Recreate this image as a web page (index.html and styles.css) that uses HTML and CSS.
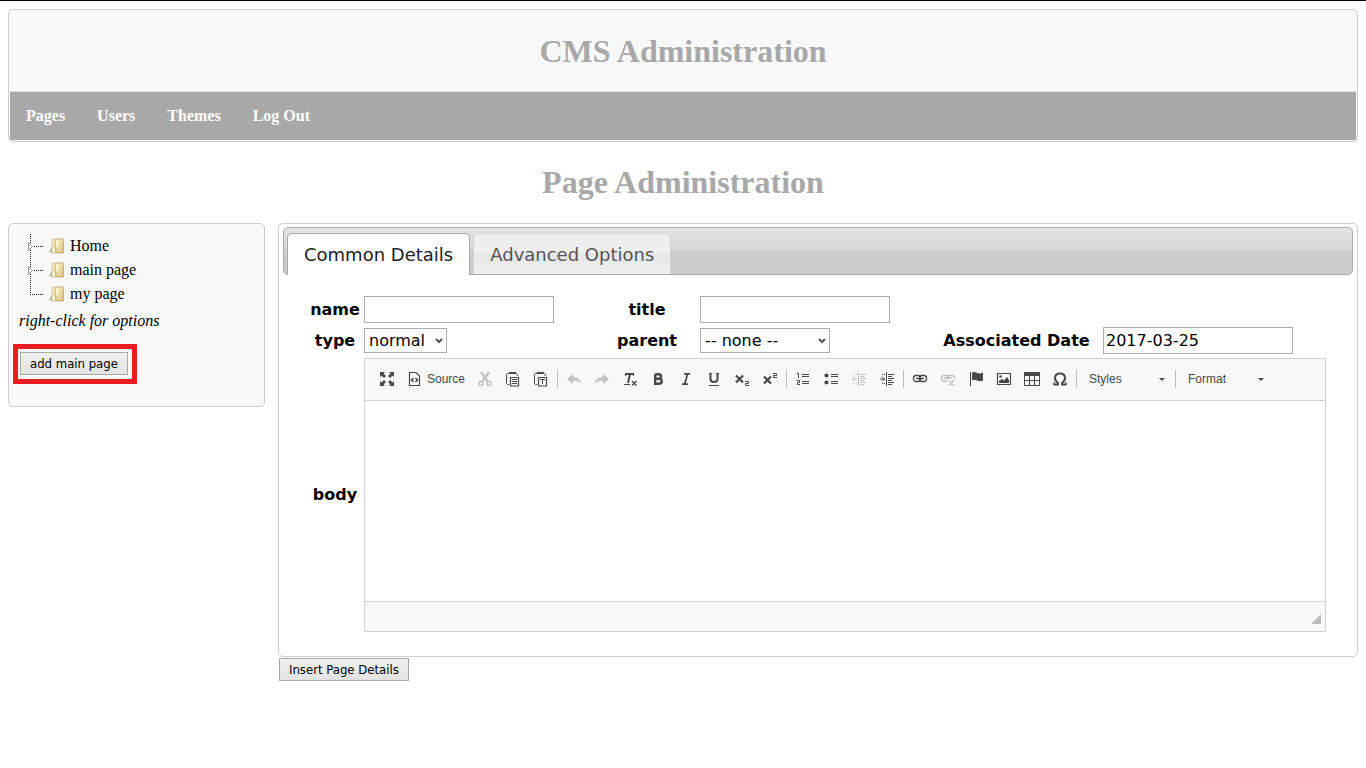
FILE: index.html
```html
<!DOCTYPE html>
<html lang="en">
<head>
<meta charset="utf-8">
<title>CMS Administration</title>
<link rel="stylesheet" href="styles.css">
</head>
<body>
<svg class="defs" width="0" height="0" aria-hidden="true">
  <defs>
    <linearGradient id="gold" x1="0" y1="0" x2="1" y2="1"><stop offset="0" stop-color="#fffae0"/><stop offset="1" stop-color="#d9b96c"/></linearGradient>
    <symbol id="folder" viewBox="0 0 16 16">
      <path d="M2 14V10L3 8V1H8V15H2Z" fill="url(#gold)" stroke="#cdbb8c" stroke-width=".7"/>
      <path d="M0 14L3 9V14Z" fill="#b8b4a8"/>
      <path d="M7 1H14.500V15H8L7 13Z" fill="url(#gold)" stroke="#c2a766" stroke-width=".8"/>
      <path d="M7 2L9 3V9H7ZM4 9L6 10V14H3Z" fill="#fff6cc"/>
    </symbol>
  </defs>
</svg>
<header class="masthead">
  <h1 class="masthead-title">CMS Administration</h1>
  <nav class="menu">
    <a href="#pages">Pages</a>
    <a href="#users">Users</a>
    <a href="#themes">Themes</a>
    <a href="#logout">Log Out</a>
  </nav>
</header>
<h1 class="page-title">Page Administration</h1>
<div class="layout">
  <aside class="sidebar">
    <ul class="tree">
      <li><svg class="branch" viewBox="0 0 20 24"><path class="dots" d="M4.500 0V24M8 12.500H17"/><path d="M2.500 8.500V16.500L6.500 12.500Z" fill="#fff" stroke="#999"/></svg><svg class="icon"><use href="#folder"/></svg><a href="#home">Home</a></li>
      <li><svg class="branch" viewBox="0 0 20 24"><path class="dots" d="M4.500 0V24M8 12.500H17"/><path d="M2.500 8.500V16.500L6.500 12.500Z" fill="#fff" stroke="#999"/></svg><svg class="icon"><use href="#folder"/></svg><a href="#main">main page</a></li>
      <li><svg class="branch" viewBox="0 0 20 24"><path class="dots" d="M4.500 0V12.500H17"/></svg><svg class="icon"><use href="#folder"/></svg><a href="#my">my page</a></li>
    </ul>
    <em class="hint">right-click for options</em>
    <div class="highlight"><button type="button" class="btn">add main page</button></div>
  </aside>
  <main>
    <form>
      <div class="panel">
        <div class="tabs" role="tablist">
          <a class="tab active" href="#common" role="tab" aria-selected="true">Common Details</a>
          <a class="tab" href="#advanced" role="tab" aria-selected="false">Advanced Options</a>
        </div>
        <div class="fields">
          <label for="name">name</label>
          <input class="text" id="name" type="text">
          <label for="title">title</label>
          <input class="text" id="title" type="text">
          <span class="blank"></span>
          <label for="type">type</label>
          <div class="drop drop-type"><select id="type"><option>normal</option></select><svg viewBox="0 0 8 8"><path d="M1 2L4 5L7 2" fill="none" stroke="#555" stroke-width="2"/></svg></div>
          <label for="parent">parent</label>
          <div class="drop drop-parent"><select id="parent"><option>-- none --</option></select><svg viewBox="0 0 8 8"><path d="M1 2L4 5L7 2" fill="none" stroke="#555" stroke-width="2"/></svg></div>
          <label for="date">Associated Date</label>
          <input class="text" id="date" type="text" value="2017-03-25">
          <label for="body">body</label>
          <div class="editor">
            <div class="toolbar" role="toolbar" aria-label="Editor toolbar">
              <button type="button" class="tool" aria-label="Maximize"><svg class="icon" viewBox="0 0 16 16"><path fill="#484848" d="M1 1H6L4.500 2.500L7 5L5 7L2.500 4.500L1 6ZM15 1V6L13.500 4.500L11 7L9 5L11.500 2.500L10 1ZM1 15V10L2.500 11.500L5 9L7 11L4.500 13.500L6 15ZM15 15H10L11.500 13.500L9 11L11 9L13.500 11.500L15 10Z"/></svg></button>
              <button type="button" class="tool source"><svg class="icon" viewBox="0 0 16 16"><path fill="none" stroke="#484848" stroke-width="1.200" d="M2.500 1.500H9L12.500 5V14.500H2.500Z"/><path fill="none" stroke="#484848" stroke-width="1.500" d="M6.500 7L4.500 9L6.500 11M8.500 7L10.500 9L8.500 11"/></svg>Source</button>
              <button type="button" class="tool off" aria-label="Cut"><svg class="icon" viewBox="0 0 16 16"><path fill="none" stroke="#484848" stroke-width="2.200" d="M4 1L11 11M12 1L5 11"/><g fill="none" stroke="#484848" stroke-width="1.500"><circle cx="4" cy="12.500" r="2"/><circle cx="12" cy="12.500" r="2"/></g></svg></button>
              <button type="button" class="tool" aria-label="Paste"><svg class="icon" viewBox="0 0 16 16"><path fill="none" stroke="#484848" d="M4 13.500H2.500L1.500 12.500V3.500L2.500 2.500H4M11 2.500L12.500 3.500V5"/><path fill="#484848" d="M4 1H11V3H4Z"/><path fill="#f8f8f8" stroke="#484848" stroke-width="1.200" d="M5.500 6.500H13.500V15H5.500Z"/><path stroke="#484848" d="M7 8.500H12M7 10.500H12M7 12.500H12"/></svg></button>
              <button type="button" class="tool" aria-label="Paste as text"><svg class="icon" viewBox="0 0 16 16"><path fill="none" stroke="#484848" d="M4 13.500H2.500L1.500 12.500V3.500L2.500 2.500H4M11 2.500L12.500 3.500V5"/><path fill="#484848" d="M4 1H11V3H4Z"/><path fill="#f8f8f8" stroke="#484848" stroke-width="1.200" d="M5.500 6.500H13.500V15H5.500Z"/><path stroke="#484848" d="M7 8.500H12M9.500 8V13"/></svg></button>
              <span class="sep"></span>
              <button type="button" class="tool off" aria-label="Undo"><svg class="icon" viewBox="0 0 16 16"><path fill="#484848" d="M1 8L7 3V6C12 6 15 9 15 13C13 10 10 9.500 7 10V13Z"/></svg></button>
              <button type="button" class="tool off" aria-label="Redo"><svg class="icon" viewBox="0 0 16 16"><path fill="#484848" d="M15 8L9 3V6C4 6 1 9 1 13C3 10 6 9.500 9 10V13Z"/></svg></button>
              <button type="button" class="tool" aria-label="Remove format"><svg class="icon" viewBox="0 0 16 16"><g fill="none" stroke="#484848"><path stroke-width="2" d="M3 3H12M8 3L6 12"/><path d="M3.500 2V5M11.500 2V5M2 13.500H8"/><path stroke-width="1.400" d="M10 10L14.500 14.500M14.500 10L10 14.500"/></g></svg></button>
              <button type="button" class="tool" aria-label="Bold"><svg class="icon" viewBox="0 0 16 16"><path fill="none" stroke="#484848" stroke-width="2.400" d="M5.200 3.200H8.500Q11 3.200 11 5.400Q11 7.700 8.500 7.700H5.200M8.500 7.700Q11.800 7.700 11.800 10.200Q11.800 12.800 8.500 12.800H5.200V3.200"/></svg></button>
              <button type="button" class="tool" aria-label="Italic"><svg class="icon" viewBox="0 0 16 16"><path fill="none" stroke="#484848" stroke-width="1.800" d="M6 2.900H12M4 13.100H10M9.500 3L6.700 13"/></svg></button>
              <button type="button" class="tool" aria-label="Underline"><svg class="icon" viewBox="0 0 16 16"><path fill="none" stroke="#484848" stroke-width="2" d="M4.500 2V8Q4.500 11 8 11Q11.500 11 11.500 8V2"/><path stroke="#484848" d="M3 2.500H6M10 2.500H13M3 14.500H13"/></svg></button>
              <button type="button" class="tool" aria-label="Subscript"><svg class="icon" viewBox="0 0 16 16"><path fill="none" stroke="#484848" stroke-width="2.200" d="M2 4.500L9 11.500M9 4.500L2 11.500"/><path fill="none" stroke="#484848" d="M11 10.500H14.500V12.500H11.500V14.500H15"/></svg></button>
              <button type="button" class="tool" aria-label="Superscript"><svg class="icon" viewBox="0 0 16 16"><path fill="none" stroke="#484848" stroke-width="2.200" d="M2 5.500L9 12.500M9 5.500L2 12.500"/><path fill="none" stroke="#484848" d="M11 2.500H14.500V4.500H11.500V6.500H15"/></svg></button>
              <span class="sep"></span>
              <button type="button" class="tool" aria-label="Numbered list"><svg class="icon" viewBox="0 0 16 16"><path fill="none" stroke="#484848" d="M2 2.500H3.500V7M1.500 9.500H4.500V11.500H2.500V13.500H5M7 3.500H14M7 5.500H14M7 10.500H14M7 12.500H14"/></svg></button>
              <button type="button" class="tool" aria-label="Bulleted list"><svg class="icon" viewBox="0 0 16 16"><g fill="#484848"><circle cx="3.500" cy="4.500" r="2.100"/><circle cx="3.500" cy="11.500" r="2.100"/></g><path stroke="#484848" d="M8 3.500H15M8 5.500H15M8 10.500H15M8 12.500H15"/></svg></button>
              <button type="button" class="tool off" aria-label="Decrease indent"><svg class="icon" viewBox="0 0 16 16"><path fill="none" stroke="#484848" d="M7.500 1V15M9 3.500H15M9 5.500H13M9 7.500H15M9 9.500H13M9 11.500H15M9 13.500H13M3 3.500H4M5 3.500H6M3 12.500H4M5 12.500H6M1 8H6M4 5.500L1.500 8L4 10.500"/></svg></button>
              <button type="button" class="tool" aria-label="Increase indent"><svg class="icon" viewBox="0 0 16 16"><path fill="none" stroke="#484848" d="M7.500 1V15M9 3.500H15M9 5.500H13M9 7.500H15M9 9.500H13M9 11.500H15M9 13.500H13M3 3.500H4M5 3.500H6M3 12.500H4M5 12.500H6M1 8H6M3 5.500L5.500 8L3 10.500"/></svg></button>
              <span class="sep"></span>
              <button type="button" class="tool" aria-label="Link"><svg class="icon" viewBox="0 0 16 16"><g fill="none" stroke="#484848" stroke-width="1.300"><rect x="1.500" y="4.500" width="7" height="6" rx="2.500"/><rect x="7.500" y="4.500" width="7" height="6" rx="2.500"/><path d="M4 7.500H12"/></g></svg></button>
              <button type="button" class="tool off" aria-label="Unlink"><svg class="icon" viewBox="0 0 16 16"><g fill="none" stroke="#484848" stroke-width="1.500"><path d="M8 10H4Q1.500 10 1.500 7.300T4 4.500H6.500Q9 4.500 9 7.300M7 7.300Q7 4.500 9.500 4.500H12Q14.500 4.500 14.500 7.500M4 7.300H12M9 9.500L14 14.500M14 9.500L9 14.500"/></g></svg></button>
              <button type="button" class="tool" aria-label="Anchor"><svg class="icon" viewBox="0 0 16 16"><path stroke="#484848" d="M2.500 1V15"/><path fill="#484848" d="M4 2Q6 0 9 2Q12 3 15 1.500V9.500Q12 11 9 9.500Q6 8 4 9.500Z"/></svg></button>
              <button type="button" class="tool" aria-label="Image"><svg class="icon" viewBox="0 0 16 16"><path fill="none" stroke="#484848" stroke-width="1.200" d="M1.500 2.500H14.500V13.500H1.500Z"/><path fill="#484848" d="M3 12V10L6 8L8 9.500L11 6L13 9V12Z"/><circle cx="4.500" cy="5.500" r="1.300" fill="#484848"/></svg></button>
              <button type="button" class="tool" aria-label="Table"><svg class="icon" viewBox="0 0 16 16"><path fill="#484848" d="M0 1H16V5H0Z"/><path fill="none" stroke="#484848" d="M.5 1.500H15.500V14.500H.5ZM.5 9.500H15.500M5.500 4V15M10.500 4V15"/></svg></button>
              <button type="button" class="tool" aria-label="Special character"><svg class="icon" viewBox="0 0 16 16"><path fill="none" stroke="#484848" stroke-width="2" d="M1.500 13.500H6V12Q3 10 3 7Q3 2.500 8 2.500T13 7Q13 10 10 12V13.500H14.500"/><path stroke="#484848" d="M2 11V14M14 11V14"/></svg></button>
              <span class="sep"></span>
              <div class="combo"><select aria-label="Styles"><option>Styles</option></select><svg viewBox="0 0 6 3"><path d="M0 0H6L3 3Z" fill="#484848"/></svg></div>
              <span class="sep"></span>
              <div class="combo"><select aria-label="Format"><option>Format</option></select><svg viewBox="0 0 6 3"><path d="M0 0H6L3 3Z" fill="#484848"/></svg></div>
            </div>
            <textarea class="canvas" id="body"></textarea>
            <div class="status"><svg viewBox="0 0 10 10"><path d="M10 0V10H0Z" fill="#bbb"/></svg></div>
          </div>
        </div>
      </div>
      <button type="submit" class="btn submit">Insert Page Details</button>
    </form>
  </main>
</div>
</body>
</html>
```
FILE: styles.css
```css
* { box-sizing: border-box; }
body {
  margin: 0;
  padding: 8px;
  border-top: 1px solid #000;
  background: #fff;
  color: #000;
  font: 16px/24px "Liberation Serif", "Times New Roman", serif;
}
.defs { position: absolute; }
.icon { display: block; flex: none; width: 16px; height: 16px; }
.masthead {
  padding: 0 1px 1px;
  border: 1px solid #ccc;
  border-radius: 5px;
  background: #f8f8f8;
}
h1 { margin: 0; color: #a8a8a8; font-size: 32px; line-height: 36px; text-align: center; }
.masthead-title { padding: 23px 0 22px; }
.menu {
  display: flex;
  gap: 32px;
  padding: 12px 16px;
  border-top: 1px solid #ddd;
  background: #a8a8a8;
}
.menu a { color: #fff; font-weight: bold; text-decoration: none; }
.page-title { padding: 22px 0 23px; }
.layout { display: grid; grid-template-columns: 257px 1fr; gap: 13px; align-items: start; }
.sidebar {
  padding: 10px 4px 22px;
  border: 1px solid #ccc;
  border-radius: 5px;
  background: #f8f8f8;
}
.tree { margin: 0 0 3px; padding: 0 0 0 13px; list-style: none; }
.tree li { display: flex; align-items: center; height: 24px; }
.tree a { margin-left: 5px; color: #000; text-decoration: none; }
.branch { width: 20px; height: 24px; margin-right: 3px; }
.dots { fill: none; stroke: #222; stroke-dasharray: 1 1; }
.hint { display: block; margin: 0 0 11px 6px; }
.highlight { width: fit-content; padding: 3px 4px 4px 2px; border: 5px solid #ed1c24; }
.btn {
  display: block;
  height: 23px;
  padding: 1px 9px 0;
  border: 1px solid #a9a9a9;
  background: linear-gradient(#f0f0f0, #e2e2e2);
  color: #000;
  font: 13px/20px "DejaVu Sans Condensed", "DejaVu Sans", sans-serif;
}
.submit { margin-left: 1px; }
.panel { margin-bottom: 1px; padding: 3px 4px 24px; border: 1px solid #ccc; border-radius: 5px; }
.tabs {
  display: flex;
  gap: 3px;
  height: 48px;
  padding: 5px 3px 0;
  border: 1px solid #aaa;
  border-radius: 5px;
  background: linear-gradient(#e4e4e4, #d5d5d5 49%, #ccc 50%, #ccc);
}
.tab {
  height: 41px;
  padding: 0 16px;
  border: 1px solid #d3d3d3;
  border-bottom: 0;
  border-radius: 5px 5px 0 0;
  background: linear-gradient(#eee, #eee 49%, #e6e6e6 50%, #eee);
  color: #555;
  font: 18px/41px "DejaVu Sans", Verdana, sans-serif;
  text-decoration: none;
}
.tab.active { height: 42px; border-color: #aaa; background: #fff; color: #212121; }
.fields {
  display: grid;
  grid-template-columns: 58px 230fr 106px 230fr 173px 223fr;
  grid-template-rows: 27px 27px auto;
  row-gap: 4px;
  align-items: center;
  padding: 21px 27px 0 23px;
  font: 16px/24px "DejaVu Sans", Verdana, sans-serif;
}
.fields > label { font-weight: bold; text-align: center; }
.blank { grid-column: span 2; }
.text {
  width: 190px;
  height: 27px;
  padding: 1px 2px;
  border: 1px solid #abadb3;
  font: inherit;
}
.drop { display: grid; align-items: center; height: 25px; }
.drop-type { width: 83px; }
.drop-parent { width: 130px; }
.drop > *, .combo > * { grid-area: 1 / 1; }
.drop select {
  width: 100%;
  height: 25px;
  padding: 0 4px;
  border: 1px solid #abadb3;
  border-radius: 0;
  background: #fff;
  color: #000;
  font: inherit;
  appearance: none;
}
.drop svg { width: 8px; height: 8px; margin-right: 4px; justify-self: end; pointer-events: none; }
.editor { grid-column: 2 / -1; border: 1px solid #d1d1d1; }
.toolbar {
  display: flex;
  align-items: center;
  height: 42px;
  padding: 0 8px 1px;
  border-bottom: 1px solid #d1d1d1;
  background: #f8f8f8;
}
.tool {
  display: flex;
  align-items: center;
  height: 28px;
  padding: 6px;
  border: 0;
  background: none;
  color: #484848;
  font: 12px/16px "Liberation Sans", Arial, sans-serif;
}
.source { gap: 4px; }
.off { opacity: .3; }
.sep { width: 1px; height: 18px; margin: 0 2px; background: #bcbcbc; }
.combo { display: grid; align-items: center; width: 94px; }
.combo select {
  width: 100%;
  padding: 0 10px;
  border: 0;
  background: none;
  color: #484848;
  font: 12px/20px "Liberation Sans", Arial, sans-serif;
  appearance: none;
}
.combo svg { width: 6px; height: 3px; margin-right: 8px; justify-self: end; pointer-events: none; }
.canvas { display: block; width: 100%; height: 200px; border: 0; resize: none; }
.status {
  display: flex;
  justify-content: flex-end;
  padding: 12px 4px 7px;
  border-top: 1px solid #d1d1d1;
  background: #f8f8f8;
}
.status svg { width: 10px; height: 10px; }
```
